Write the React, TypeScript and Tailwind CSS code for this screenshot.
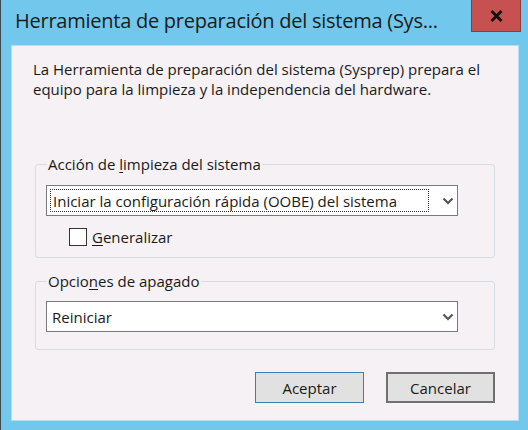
import React from "react";

const font = { fontFamily: '"Segoe UI", "Open Sans", "Noto Sans", sans-serif' };

function Chevron() {
  return (
    <svg width="12" height="8" viewBox="0 0 12 8">
      <polyline points="1.5,1.5 6,6 10.5,1.5" fill="none" stroke="#555" strokeWidth="2.2" />
    </svg>
  );
}

export default function App() {
  return (
    <div
      className="w-[528px] h-[430px] bg-[#71c7ec] border-l border-l-[#3b4a55] flex flex-col overflow-hidden"
      style={font}
    >
      <div className="h-[45px] flex items-start shrink-0">
        <div className="pl-[14px] pt-[7px] text-[20px] tracking-[-0.25px] leading-[28px] text-[#1b1b1b] w-[464px] whitespace-nowrap overflow-hidden">
          Herramienta de preparación del sistema (Sys...
        </div>
        <div className="ml-[6px] w-[50px] h-[32px] bg-[#c75050] border border-[#8e3b3b] border-t-0 flex items-center justify-center">
          <svg width="13" height="12" viewBox="0 0 13 12">
            <path d="M1.5 1 L11.5 11 M11.5 1 L1.5 11" stroke="#111" strokeWidth="2.8" />
          </svg>
        </div>
      </div>
      <div className="ml-[10px] w-[508px] h-[376px] bg-[#f5f1f5] border border-[#b7dcef] flex flex-col text-[15px] leading-[20px] text-[#1a1a1a]">
        <p className="ml-[21px] mt-[13px]">
          La Herramienta de preparación del sistema (Sysprep) prepara el
          <br />
          equipo para la limpieza y la independencia del hardware.
        </p>
        <fieldset className="ml-[23px] mt-[55px] w-[460px] border border-[#d6dee3] rounded-[3px] px-[10px] pt-[11px] pb-[11px]">
          <legend className="ml-[1px] px-[1px] leading-[20px]">
            Acción de <span className="underline underline-offset-2">l</span>impieza del sistema
          </legend>
          <div className="w-[412px] h-[31px] bg-white border border-[#7a7a7a] flex items-center">
            <div className="ml-[3px] w-[379px] h-[23px] border border-dotted border-[#333] flex items-center pl-[2px] whitespace-nowrap">
              Iniciar la configuración rápida (OOBE) del sistema
            </div>
            <div className="ml-[13px]">
              <Chevron />
            </div>
          </div>
          <div className="mt-[11px] ml-[23px] flex items-center h-[19px]">
            <div className="w-[18px] h-[18px] bg-white border border-[#333]" />
            <span className="ml-[5px]">
              <span className="underline underline-offset-2">G</span>eneralizar
            </span>
          </div>
        </fieldset>
        <fieldset className="ml-[23px] mt-[13px] w-[460px] border border-[#d6dee3] rounded-[3px] px-[10px] pt-[10px] pb-[17px]">
          <legend className="ml-[1px] px-[1px] leading-[20px]">
            Opcio<span className="underline underline-offset-2">n</span>es de apagado
          </legend>
          <div className="w-[412px] h-[31px] bg-white border border-[#7a7a7a] flex items-center">
            <div className="ml-[5px] w-[377px] whitespace-nowrap">Reiniciar</div>
            <div className="ml-[13px]">
              <Chevron />
            </div>
          </div>
        </fieldset>
        <div className="mt-[22px] flex justify-end pr-[23px] gap-[22px]">
          <button className="w-[109px] h-[31px] bg-[#e1e1e1] border border-[#3c7fb1] text-[15px] text-[#1a1a1a]">
            Aceptar
          </button>
          <button className="w-[109px] h-[31px] bg-[#e1e1e1] border-2 border-[#707070] text-[15px] text-[#1a1a1a]">
            Cancelar
          </button>
        </div>
      </div>
    </div>
  );
}
